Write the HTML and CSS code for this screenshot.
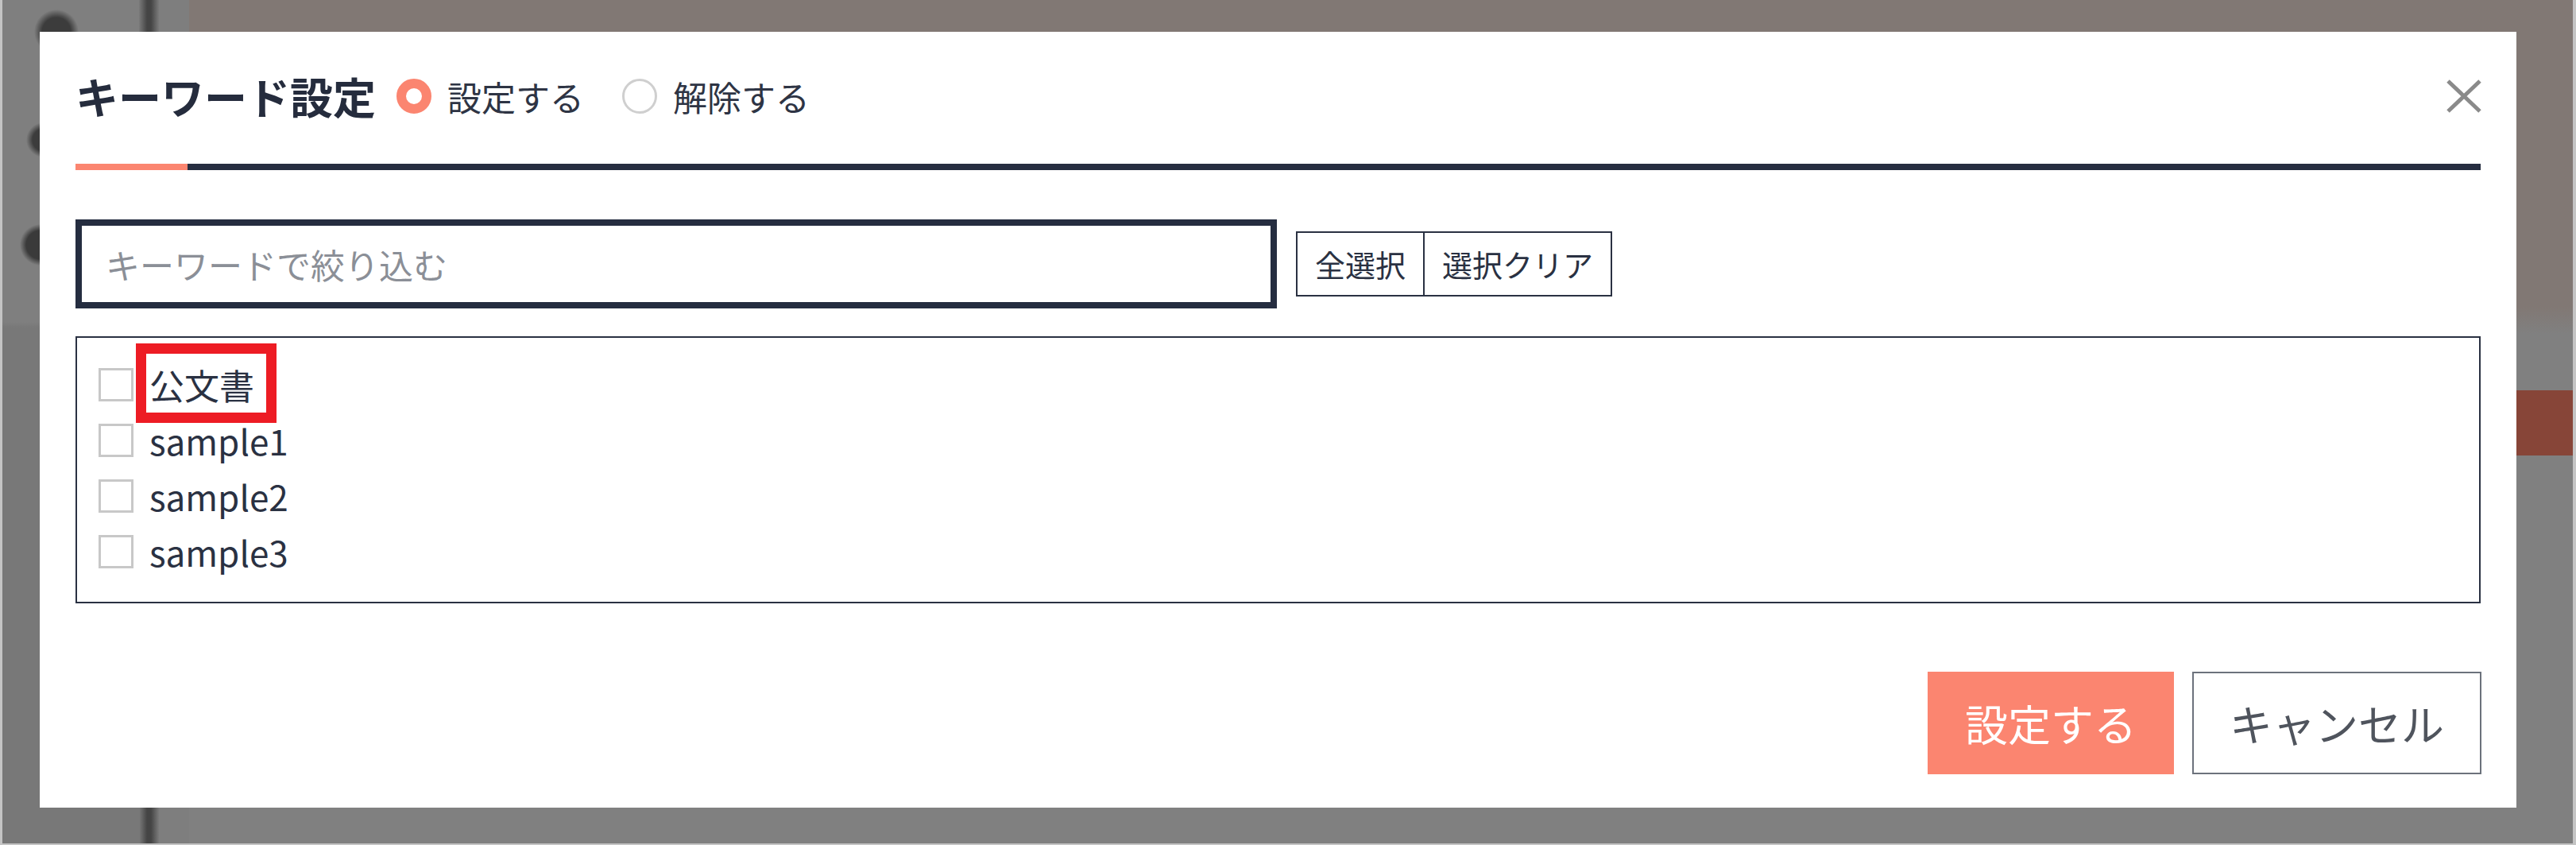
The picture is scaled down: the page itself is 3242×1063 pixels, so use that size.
FILE: index.html
```html
<!DOCTYPE html>
<html lang="ja">
<head>
  <meta charset="UTF-8">
  <title>キーワード設定</title>
  <link rel="stylesheet" href="styles.css">
</head>
<body>

<!-- dimmed page behind the dialog -->
<div class="screen">
  <div class="side"></div>
  <div class="side-rule"></div>
  <div class="side-gap"></div>
  <div class="page">
    <div class="page-head"></div>
    <div class="page-band"></div>
  </div>
</div>

<!-- Keyword dialog -->
<div class="modal">
  <div class="modal-head">
    <h2 class="modal-title">キーワード設定</h2>
    <label class="opt"><span class="radio is-on"></span>設定する</label>
    <label class="opt"><span class="radio"></span>解除する</label>
    <button class="close" aria-label="閉じる">
      <svg width="44" height="42" viewBox="0 0 44 42"><path d="M2 2 L42 40 M42 2 L2 40" stroke="#8a8a8a" stroke-width="5" fill="none"/></svg>
    </button>
  </div>
  <div class="tabline"><span class="tabline-on"></span></div>

  <div class="filter">
    <input class="filter-input" type="text" placeholder="キーワードで絞り込む">
    <div class="btn-group">
      <button class="small-btn">全選択</button>
      <button class="small-btn">選択クリア</button>
    </div>
  </div>

  <div class="keyword-list">
    <div class="keyword-row"><span class="check"></span><span class="mark">公文書</span></div>
    <div class="keyword-row"><span class="check"></span><span>sample1</span></div>
    <div class="keyword-row"><span class="check"></span><span>sample2</span></div>
    <div class="keyword-row"><span class="check"></span><span>sample3</span></div>
  </div>

  <div class="modal-foot">
    <button class="btn btn-primary">設定する</button>
    <button class="btn btn-cancel">キャンセル</button>
  </div>
</div>

</body>
</html>
```

FILE: styles.css
```css
body {
  margin: 0;
  font-family: "Noto Sans CJK JP", "Noto Sans", sans-serif;
  background: #808080;
  overflow: hidden;
}
.screen {
  display: grid;
  grid-template-columns: 172px 25px 38px 1fr;
  width: 3242px;
  height: 1063px;
  box-sizing: border-box;
  border-left: 3px solid #c4c4c4;
  border-right: 4px solid #c4c4c4;
  border-bottom: 2px solid #c4c4c4;
}
.side {
  background:
    radial-gradient(circle at 68px 40px, #3c3c3c 0 18px, rgba(60,60,60,0) 28px),
    radial-gradient(circle at 52px 176px, #3c3c3c 0 14px, rgba(60,60,60,0) 22px),
    radial-gradient(circle at 48px 308px, #3a3a3a 0 18px, rgba(60,60,60,0) 26px),
    linear-gradient(#7f7f7f 0 405px, #787878 412px);
}
.side-rule {
  background: linear-gradient(90deg, #7a7a7a, #454545 40%, #454545 60%, #7a7a7a);
}
.side-gap {
  background: #7e7e7e;
}
.page {
  display: flex;
  flex-direction: column;
}
.page-head {
  height: 420px;
  background: linear-gradient(#817874 0 386px, #808080 420px);
}
.page-band {
  margin: 71px 0 0 auto;
  width: 400px;
  height: 82px;
  background: #874538;
}

/* dialog */
.modal {
  position: fixed;
  left: 50px;
  top: 40px;
  width: 3117px;
  height: 976px;
  box-sizing: border-box;
  padding: 49px 45px 0;
  background: #fff;
  color: #272e3f;
}
.modal-head {
  display: flex;
  align-items: center;
  height: 64px;
}
.modal-title {
  margin: 0 26px 0 0;
  font-size: 54px;
  line-height: 64px;
  font-weight: bold;
  color: #252c3d;
}
.opt {
  display: flex;
  align-items: center;
  gap: 20px;
  font-size: 43px;
  line-height: 64px;
  color: #2e3444;
  margin-right: 48px;
}
.radio {
  width: 44px;
  height: 44px;
  box-sizing: border-box;
  border-radius: 50%;
  border: 3px solid #cfcfcf;
  background: #fff;
}
.radio.is-on {
  border: 12px solid #fb8570;
}
.close {
  margin-left: auto;
  margin-right: -1px;
  padding: 0;
  border: 0;
  background: none;
  display: flex;
  cursor: pointer;
}
.tabline {
  display: flex;
  height: 8px;
  margin-top: 53px;
  background: #262d40;
}
.tabline-on {
  width: 141px;
  background: #fb8570;
}

.filter {
  display: flex;
  align-items: center;
  margin-top: 62px;
}
.filter-input {
  width: 1512px;
  height: 112px;
  box-sizing: border-box;
  border: 8px solid #252d40;
  padding: 0 30px;
  font-family: inherit;
  font-size: 43px;
  color: #272e3f;
  outline: none;
}
.filter-input::placeholder {
  color: #8b8f97;
}
.btn-group {
  display: flex;
  margin-left: 24px;
}
.small-btn {
  height: 82px;
  padding: 0 22px;
  border: 2px solid #2a3142;
  background: #fff;
  font-family: inherit;
  font-size: 38px;
  line-height: 78px;
  color: #2a3142;
  cursor: pointer;
}
.small-btn + .small-btn {
  border-left: 0;
}

.keyword-list {
  margin-top: 35px;
  height: 336px;
  box-sizing: border-box;
  border: 2px solid #2a3142;
  padding: 24px 27px 0;
}
.keyword-row {
  display: flex;
  align-items: center;
  gap: 20px;
  height: 70px;
  font-size: 44px;
  color: #2a3142;
}
.check {
  width: 44px;
  height: 42px;
  box-sizing: border-box;
  border: 3px solid #c8c8c8;
}
.mark {
  position: relative;
  display: inline-block;
  line-height: 70px;
}
.mark::after {
  content: "";
  position: absolute;
  left: -17px;
  right: -28px;
  top: -17px;
  bottom: -13px;
  border: 13px solid #ed1c24;
}

.modal-foot {
  display: flex;
  justify-content: flex-end;
  gap: 23px;
  margin-top: 86px;
  margin-right: -1px;
}
.btn {
  height: 129px;
  padding: 0 47px;
  font-family: inherit;
  font-size: 54px;
  cursor: pointer;
}
.btn-primary {
  border: 0;
  background: #fb8570;
  color: #fff;
}
.btn-cancel {
  padding: 0 45px;
  border: 2px solid #6c727c;
  background: #fff;
  color: #4f545d;
}
```
